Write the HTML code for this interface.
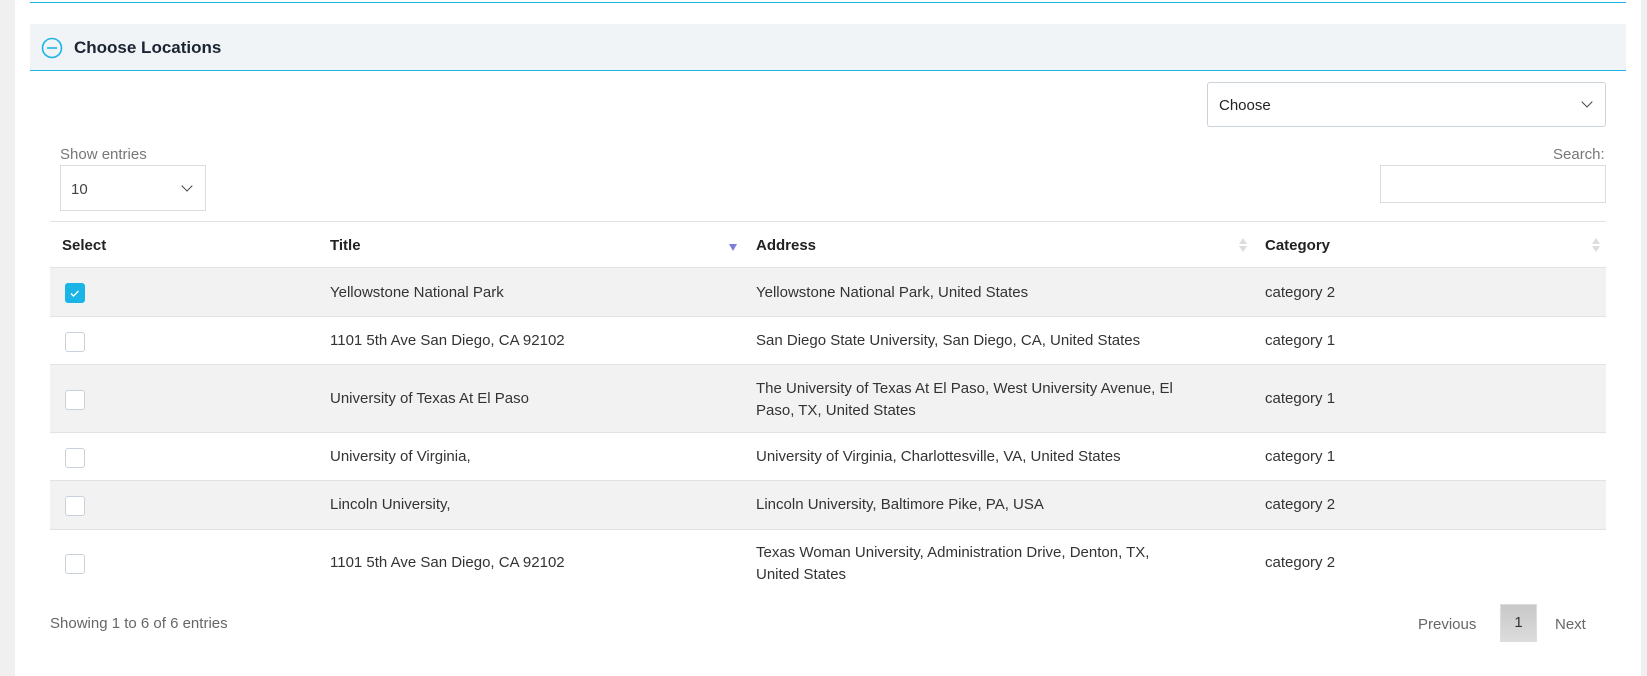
<!DOCTYPE html>
<html><head><meta charset="utf-8"><style>
*{box-sizing:border-box;margin:0;padding:0}
body{width:1647px;height:676px;background:#f0f0f0;font-family:"Liberation Sans",sans-serif;color:#333;position:relative;overflow:hidden}
.main{position:absolute;left:15px;top:0;width:1626px;height:676px;background:#fff}
.abs{position:absolute}
.topline{left:30px;top:2px;width:1596px;height:1px;background:#1ab4e6}
.hdr{left:30px;top:24px;width:1596px;height:47px;background:#f1f4f7;border-bottom:1.5px solid #1ab4e6}
.hdr span{position:absolute;left:44px;top:14px;font-size:17px;font-weight:bold;color:#1c2433}
.sel{border:1px solid #ccd3db;border-radius:3px;background:#fff}
.chev{position:absolute;width:8px;height:8px;border-right:1.6px solid #444;border-bottom:1.6px solid #444;transform:rotate(45deg)}
.row{position:absolute;left:50px;width:1556px;border-top:1px solid #e2e2e2;font-size:15px}
.row.g{background:#f2f2f2}
.row div{position:absolute}
.cb{left:15px;width:20px;height:20px;border:1px solid #c9d1db;border-radius:3px;background:#fff}
.th{font-weight:bold;font-size:15px;color:#222}
.arr{position:absolute;width:0;height:0;border-left:4px solid transparent;border-right:4px solid transparent}
</style></head><body>
<div class="main">
<div class="abs topline" style="left:15px"></div>
<div class="abs hdr" style="left:15px">
 <svg class="abs" style="left:11px;top:13px" width="22" height="22" viewBox="0 0 22 22"><circle cx="11" cy="11" r="9.5" fill="none" stroke="#1ab4e6" stroke-width="1.6"/><line x1="6" y1="11" x2="16" y2="11" stroke="#1ab4e6" stroke-width="1.6"/></svg>
 <span>Choose Locations</span>
</div>
<div class="abs sel" style="left:1192px;top:82px;width:399px;height:45px"><span style="position:absolute;left:11px;top:14px;font-size:15px;color:#222">Choose</span><div class="chev" style="left:375px;top:15px"></div></div>
<div class="abs" style="left:45px;top:146px;font-size:15px;color:#777">Show entries</div>
<div class="abs sel" style="left:45px;top:165px;width:146px;height:46px;border-radius:0;border-color:#ddd"><span style="position:absolute;left:10px;top:15px;font-size:15px;color:#444">10</span><div class="chev" style="left:122px;top:16px"></div></div>
<div class="abs" style="left:1538px;top:146px;font-size:15px;color:#777">Search:</div>
<div class="abs" style="left:1365px;top:165px;width:226px;height:38px;border:1px solid #ddd"></div>

<div class="row" style="top:221px;height:46px;left:35px">
 <div class="th" style="left:12px;top:15px">Select</div>
 <div class="th" style="left:280px;top:15px">Title</div>
 <div class="arr" style="left:679px;top:22px;border-top:7px solid #7b7fd9"></div>
 <div class="th" style="left:706px;top:15px">Address</div>
 <div class="arr" style="left:1189px;top:16px;border-bottom:6px solid #ddd"></div><div class="arr" style="left:1189px;top:24px;border-top:6px solid #ddd"></div>
 <div class="th" style="left:1215px;top:15px">Category</div>
 <div class="arr" style="left:1542px;top:16px;border-bottom:6px solid #ddd"></div><div class="arr" style="left:1542px;top:24px;border-top:6px solid #ddd"></div>
</div>

<div class="row g" style="top:267px;height:49px;left:35px">
 <div class="cb" style="top:15px;background:#1ab4e6;border-color:#1ab4e6"><svg width="18" height="18" viewBox="0 0 18 18"><path d="M5 9.5l2.5 2.5 5-5" fill="none" stroke="#fff" stroke-width="1.4"/></svg></div>
 <div style="left:280px;top:16px">Yellowstone National Park</div>
 <div style="left:706px;top:16px">Yellowstone National Park, United States</div>
 <div style="left:1215px;top:16px">category 2</div>
</div>
<div class="row" style="top:316px;height:48px;left:35px">
 <div class="cb" style="top:15px"></div>
 <div style="left:280px;top:15px">1101 5th Ave San Diego, CA 92102</div>
 <div style="left:706px;top:15px">San Diego State University, San Diego, CA, United States</div>
 <div style="left:1215px;top:15px">category 1</div>
</div>
<div class="row g" style="top:364px;height:68px;left:35px">
 <div class="cb" style="top:25px"></div>
 <div style="left:280px;top:25px">University of Texas At El Paso</div>
 <div style="left:706px;top:13px;line-height:22px">The University of Texas At El Paso, West University Avenue, El<br>Paso, TX, United States</div>
 <div style="left:1215px;top:25px">category 1</div>
</div>
<div class="row" style="top:432px;height:48px;left:35px">
 <div class="cb" style="top:15px"></div>
 <div style="left:280px;top:15px">University of Virginia,</div>
 <div style="left:706px;top:15px">University of Virginia, Charlottesville, VA, United States</div>
 <div style="left:1215px;top:15px">category 1</div>
</div>
<div class="row g" style="top:480px;height:49px;left:35px">
 <div class="cb" style="top:15px"></div>
 <div style="left:280px;top:15px">Lincoln University,</div>
 <div style="left:706px;top:15px">Lincoln University, Baltimore Pike, PA, USA</div>
 <div style="left:1215px;top:15px">category 2</div>
</div>
<div class="row" style="top:529px;height:68px;left:35px">
 <div class="cb" style="top:24px"></div>
 <div style="left:280px;top:24px">1101 5th Ave San Diego, CA 92102</div>
 <div style="left:706px;top:12px;line-height:22px">Texas Woman University, Administration Drive, Denton, TX,<br>United States</div>
 <div style="left:1215px;top:24px">category 2</div>
</div>

<div class="abs" style="left:35px;top:615px;font-size:15px;color:#666">Showing 1 to 6 of 6 entries</div>
<div class="abs" style="left:1403px;top:616px;font-size:15px;color:#666">Previous</div>
<div class="abs" style="left:1485px;top:604px;width:37px;height:38px;border:1px solid #ddd;background:linear-gradient(#c8c8c8,#dcdcdc);font-size:15px;color:#333;text-align:center;line-height:36px">1</div>
<div class="abs" style="left:1540px;top:616px;font-size:15px;color:#666">Next</div>
</div>
</body></html>
